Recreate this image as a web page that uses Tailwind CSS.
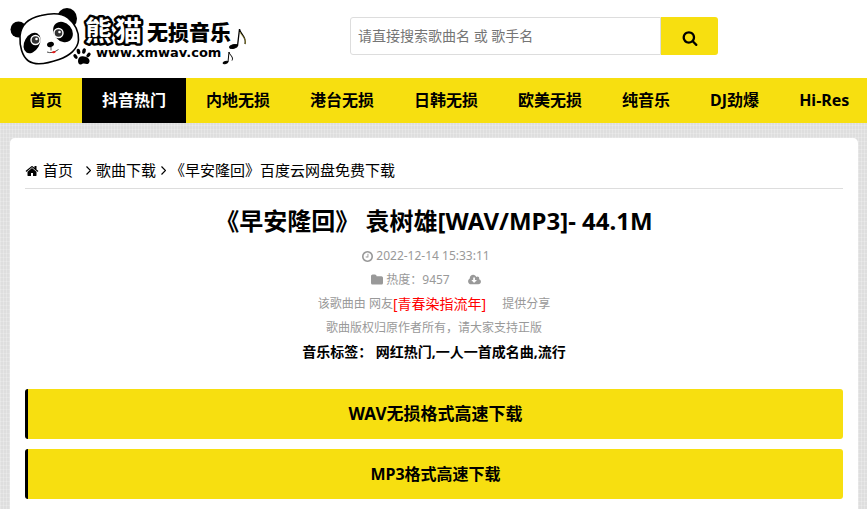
<!DOCTYPE html>
<html lang="zh-CN">
<head>
    <meta charset="UTF-8">
    <meta name="viewport" content="width=device-width, initial-scale=1">
    <title>《早安隆回》百度云网盘免费下载</title>
    <script src="https://cdn.jsdelivr.net/npm/@tailwindcss/browser@4"></script>
</head>
<body class="min-h-screen flex flex-col overflow-x-hidden text-black bg-[#dedede] bg-[repeating-linear-gradient(0deg,#ffffff30_0px,#ffffff30_1px,transparent_1px,transparent_4px),repeating-linear-gradient(90deg,#ffffff38_0px,#ffffff38_1px,transparent_1px,transparent_3px)] font-['Noto_Sans','Noto_Sans_CJK_SC',sans-serif]">

    <header class="bg-white h-[78px] shrink-0 flex items-start">
        <a href="#" aria-label="熊猫无损音乐" class="w-[350px] shrink-0">
            <svg class="block w-[250px] h-[75px]" viewBox="0 0 250 75">
                <!-- panda -->
                <circle cx="18.500" cy="29.500" r="8"/>
                <ellipse cx="67" cy="18.500" rx="10" ry="10.500"/>
                <path d="M20 36C21 25 29 18 41 15.500C51 13 62 13 68 18C74 23 79 31 78.500 40C78 49 69 56 59 59.500C49 63 36 66 28.500 61C22 56.500 19.500 46 20 36Z" fill="#fff" stroke="#000" stroke-width="1.600"/>
                <ellipse cx="32" cy="43" rx="7.500" ry="11" transform="rotate(30 32 43)"/>
                <ellipse cx="63" cy="32" rx="11" ry="9" transform="rotate(50 63 32)"/>
                <circle cx="35.500" cy="40" r="4.500" fill="#333" stroke="#fff" stroke-width="1.400"/>
                <circle cx="58.500" cy="33" r="4.500" fill="#333" stroke="#fff" stroke-width="1.400"/>
                <circle cx="36.500" cy="39" r="1.300" fill="#fff"/>
                <circle cx="59.500" cy="32" r="1.300" fill="#fff"/>
                <ellipse cx="50.500" cy="44.500" rx="3.500" ry="2.500" transform="rotate(-15 50.500 44.500)"/>
                <path d="M51 47V50.500M47 52Q52 54 58.500 49.500" fill="none" stroke="#000" stroke-width="0.700"/>
                <path d="M51 52.500Q54 50 56 51.500Q55 54.500 51 52.500Z" fill="#e21a1a"/>
                <!-- paw -->
                <path d="M78 61C78 57 81 55.500 84 56.500C89 57 91 61 88.500 63.500C86 65 85 62.500 82 64C79.500 65.500 78 63.500 78 61Z"/>
                <ellipse cx="75.500" cy="56.500" rx="1.700" ry="2.700" transform="rotate(-40 75.500 56.500)"/>
                <ellipse cx="78.500" cy="51.500" rx="1.800" ry="2.900" transform="rotate(-15 78.500 51.500)"/>
                <ellipse cx="84" cy="51" rx="1.800" ry="2.900" transform="rotate(15 84 51)"/>
                <ellipse cx="88.500" cy="55" rx="1.700" ry="2.700" transform="rotate(40 88.500 55)"/>
                <!-- site name -->
                <text x="85 115" y="41" class="text-[27px] font-bold font-['Noto_Sans_CJK_SC',sans-serif]" fill="#fff" stroke="#000" stroke-width="5" stroke-linejoin="round" paint-order="stroke">熊猫</text>
                <text x="147" y="40" class="text-[21px] font-black font-['Noto_Sans_CJK_SC',sans-serif]">无损音乐</text>
                <text x="96" y="57" class="text-[13px] font-bold font-['DejaVu_Sans',sans-serif]">www.xmwav.com</text>
                <!-- notes -->
                <g fill="#000" stroke="#000">
                    <ellipse cx="233.500" cy="46.500" rx="4" ry="1.800" transform="rotate(-15 233.500 46.500)"/>
                    <path d="M237.500 46L239.500 29C240 34 247 37 245 44" fill="none" stroke-width="1.300"/>
                    <path d="M240 32C241 36 247 38 245 44" fill="none" stroke="#a89a28" stroke-width="0.700"/>
                    <ellipse cx="225.500" cy="62.500" rx="2.500" ry="1.100" transform="rotate(-15 225.500 62.500)"/>
                    <path d="M228 62L229 52C229.500 55 234 57 232 60.500" fill="none"/>
                </g>
            </svg>
        </a>
        <form class="flex mt-[17px] h-[38px]" onsubmit="return false">
            <label for="keyword" class="sr-only">搜索</label>
            <input id="keyword" type="text" placeholder="请直接搜索歌曲名 或 歌手名" class="w-[311px] px-[7px] text-[14px] leading-6 border border-[#ddd] rounded-l-[3px] placeholder:text-[#757575] outline-none">
            <button type="submit" aria-label="搜索" class="w-[57px] flex items-center justify-center bg-[#f7df10] rounded-r-[3px]">
                <svg class="size-4 mt-1" viewBox="0 0 1792 1792"><path d="M1216 832q0-185-131.500-316.500t-316.500-131.500-316.500 131.500-131.500 316.500 131.500 316.500 316.500 131.500 316.500-131.500 131.500-316.500zm512 832q0 52-38 90t-90 38q-54 0-90-38l-343-342q-179 124-399 124-143 0-273.500-55.500t-225-150-150-225-55.500-273.500 55.500-273.500 150-225 225-150 273.500-55.500 273.500 55.500 225 150 150 225 55.500 273.500q0 220-124 399l343 343q37 37 37 90z"/></svg>
            </button>
        </form>
    </header>

    <nav class="bg-[#f7df10] shrink-0 overflow-hidden">
        <ul class="flex pl-2.5 text-[16px] leading-[45px] font-bold whitespace-nowrap">
            <li><a href="#" class="block px-5">首页</a></li>
            <li><a href="#" class="block px-5 bg-black text-white">抖音热门</a></li>
            <li><a href="#" class="block px-5">内地无损</a></li>
            <li><a href="#" class="block px-5">港台无损</a></li>
            <li><a href="#" class="block px-5">日韩无损</a></li>
            <li><a href="#" class="block px-5">欧美无损</a></li>
            <li><a href="#" class="block px-5">纯音乐</a></li>
            <li><a href="#" class="block px-5">DJ劲爆</a></li>
            <li><a href="#" class="block px-5">Hi-Res</a></li>
        </ul>
    </nav>

    <main class="grow mt-[15px] ml-2.5 mr-[9px] px-[15px] pt-[15px] pb-[11px] bg-white rounded-t-[5px]">
        <div class="flex items-center h-9 border-b border-[#ddd] text-[15px] whitespace-nowrap">
            <svg class="w-[14px] h-[14px] mr-1" viewBox="64 0 1664 1792"><path d="M1472 992v480q0 26-19 45t-45 19h-384v-384h-256v384h-384q-26 0-45-19t-19-45v-480q0-1 .5-3t.5-3l575-474 575 474q1 2 1 6zm223-69l-62 74q-8 9-21 11h-3q-13 0-21-7l-692-577-692 577q-12 8-24 7-13-2-21-11l-62-74q-8-10-7-23.500t11-21.500l719-599q32-26 76-26t76 26l244 204v-195q0-14 9-23t23-9h192q14 0 23 9t9 23v408l219 182q10 8 11 21.500t-7 23.500z"/></svg>
            <a href="#">首页</a>
            <svg class="w-[5px] h-[9px] ml-[13px] mr-[5px]" viewBox="0 0 5 9" fill="none" stroke="#000" stroke-width="1.200"><path d="M.5.5L4.500 4.500L.5 8.500"/></svg>
            <a href="#">歌曲下载</a>
            <svg class="w-[5px] h-[9px] ml-[5px] mr-1" viewBox="0 0 5 9" fill="none" stroke="#000" stroke-width="1.200"><path d="M.5.5L4.500 4.500L.5 8.500"/></svg>
            <span>《早安隆回》百度云网盘免费下载</span>
        </div>

        <h1 class="mt-[13px] mb-1 text-center text-[24px] leading-[38px] font-bold">《早安隆回》 袁树雄[WAV/MP3]- 44.1M</h1>

        <div class="text-center text-[12px] leading-6 text-[#999]">
            <p class="flex items-center justify-center gap-[3px] -ml-4">
                <svg class="size-[11px] fill-current" viewBox="128 128 1536 1536"><path d="M1024 544v448q0 14-9 23t-23 9h-320q-14 0-23-9t-9-23v-64q0-14 9-23t23-9h224v-352q0-14 9-23t23-9h64q14 0 23 9t9 23zm416 352q0-148-73-273t-198-198-273-73-273 73-198 198-73 273 73 273 198 198 273 73 273-73 198-198 73-273zm224 0q0 209-103 385.500t-279.500 279.500-385.500 103-385.500-103-279.500-279.500-103-385.500 103-385.500 279.500-279.500 385.500-103 385.500 103 279.500 279.500 103 385.500z"/></svg>
                2022-12-14 15:33:11
            </p>
            <p class="flex items-center justify-center gap-[3px] -ml-4">
                <svg class="size-3 fill-current" viewBox="64 64 1664 1664"><path d="M1728 608v704q0 92-66 158t-158 66h-1216q-92 0-158-66t-66-158v-960q0-92 66-158t158-66h320q92 0 158 66t66 158v32h672q92 0 158 66t66 158z"/></svg>
                热度：9457
                <svg class="w-[13px] h-3 ml-[15px] fill-current" viewBox="-64 0 1920 1792"><path d="M1216 928q0-14-9-23t-23-9h-224v-352q0-13-9.500-22.500t-22.500-9.500h-192q-13 0-22.500 9.500t-9.500 22.500v352h-224q-13 0-22.500 9.500t-9.500 22.500q0 14 9 23l352 352q9 9 23 9t23-9l351-351q10-12 10-24zm640 224q0 159-112.500 271.500t-271.500 112.500h-1088q-185 0-316.500-131.500t-131.500-316.500q0-130 70-240t188-165q-2-30-2-43 0-212 150-362t362-150q156 0 285.500 87t188.500 231q71-62 166-62 106 0 181 75t75 181q0 76-41 138 130 31 213.500 135.500t83.500 238.500z"/></svg>
            </p>
            <p class="flex justify-center whitespace-pre">该歌曲由 网友<span class="text-[14px] text-[#f00] mr-4">[青春染指流年]</span>提供分享</p>
            <p>歌曲版权归原作者所有，请大家支持正版</p>
            <p class="text-[14px] font-bold text-black">音乐标签： 网红热门,一人一首成名曲,流行</p>
        </div>

        <div class="mt-[25px] grid gap-2.5 text-center font-bold leading-[50px]">
            <a href="#" class="block bg-[#f7df10] border-l-[3px] border-black rounded-[3px] text-[17px]">WAV无损格式高速下载</a>
            <a href="#" class="block bg-[#f7df10] border-l-[3px] border-black rounded-[3px] text-[16px]">MP3格式高速下载</a>
        </div>
    </main>

</body>
</html>
